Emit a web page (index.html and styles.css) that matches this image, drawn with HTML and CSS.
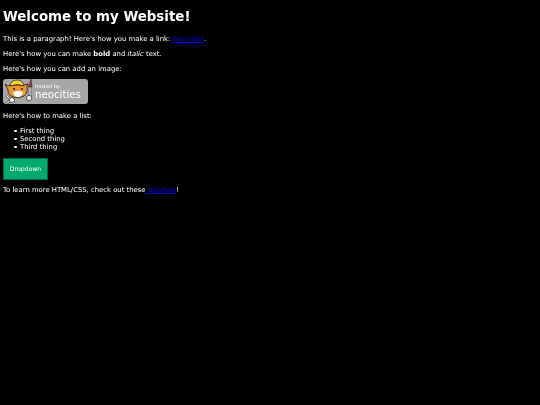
FILE: index.html
```html
<!DOCTYPE html>
<html lang="en">
<head>
    <meta charset="UTF-8">
    <title>My Website</title>
    <link rel="stylesheet" href="styles.css">
</head>
<body>
    <h1>Welcome to my Website!</h1>
    <p>This is a paragraph! Here's how you make a link: <a href="#">Neocities</a>.</p>
    <p>Here's how you can make <strong>bold</strong> and <em>italic</em> text.</p>
    <p>Here's how you can add an image:</p>
    <a href="#" class="badge">
        <svg class="badge-cat" width="32" height="25" viewBox="0 0 32 25">
            <path d="M5 7 L2 5 L5 11 Q5 16 10 18 Q16 20 21 17 Q25 14 24 8 L25 5 L21 6 L8 6 Z" fill="#e8962e" stroke="#1c1c1c" stroke-width="0.8"/>
            <path d="M7 7 Q8 1 14 1 Q20 1 21 7 Q14 4 7 7 Z" fill="#f2d23c" stroke="#1c1c1c" stroke-width="0.7"/>
            <path d="M10 13 Q15 11 20 13 Q19 18 15 18 Q11 18 10 13 Z" fill="#fff"/>
            <circle cx="11" cy="10" r="1" fill="#1c1c1c"/>
            <circle cx="19" cy="10" r="1" fill="#1c1c1c"/>
            <path d="M3 16 L12 25 M11 19 L4 24" stroke="#1c1c1c" stroke-width="2.2"/>
            <path d="M3 16 L12 25 M11 19 L4 24" stroke="#eee" stroke-width="1.2"/>
            <circle cx="9" cy="21" r="2.5" fill="#fff" stroke="#1c1c1c" stroke-width="0.7"/>
            <path d="M27 8 L27 17" stroke="#1c1c1c" stroke-width="2.4"/>
            <path d="M27 8 L27 17" stroke="#eee" stroke-width="1.4"/>
            <path d="M28 0 L29 8 L25.5 8 Z" fill="#a8323a" stroke="#1c1c1c" stroke-width="0.5"/>
            <circle cx="26" cy="19" r="2.6" fill="#fff" stroke="#1c1c1c" stroke-width="0.7"/>
        </svg>
        <span class="badge-text">
            <span class="badge-small">hosted by,</span>
            <span class="badge-big">neocities</span>
        </span>
    </a>
    <p>Here's how to make a list:</p>
    <ul>
        <li>First thing</li>
        <li>Second thing</li>
        <li>Third thing</li>
    </ul>
    <button class="dropbtn">Dropdown</button>
    <p>To learn more HTML/CSS, check out these <a href="#">tutorials</a>!</p>
</body>
</html>
```

FILE: styles.css
```css
body {
    margin: 0;
    padding: 9px 3px 0;
    background-color: #000;
    color: #fff;
    font-family: "DejaVu Sans", sans-serif;
    font-size: 6.85px;
    line-height: 8px;
    filter: blur(0.25px);
}
h1 {
    margin: 0 0 10.4px;
    font-size: 13.4px;
    line-height: 16px;
}
p {
    margin: 0 0 6.7px;
}
a {
    color: #0000ee;
}
.badge {
    display: flex;
    width: 85px;
    height: 25px;
    margin-bottom: 8px;
    border-radius: 3px;
    background-color: #a6a6a6;
    color: #fff;
    text-decoration: none;
}
.badge-text {
    display: flex;
    flex-direction: column;
    padding-top: 4px;
}
.badge-small {
    font-size: 5px;
    line-height: 6px;
}
.badge-big {
    font-size: 10.2px;
    line-height: 11px;
}
ul {
    margin: 0 0 6.7px;
    padding-left: 17px;
    list-style: none;
}
li::before {
    content: "";
    display: inline-block;
    width: 2.5px;
    height: 2.5px;
    margin: 0 3.5px 1px -6px;
    border-radius: 50%;
    background-color: #fff;
}
.dropbtn {
    display: block;
    width: 45px;
    height: 22px;
    margin-bottom: 6px;
    padding: 0;
    border: 1px solid #00663f;
    background-color: #04aa6d;
    color: #fff;
    font-family: inherit;
    font-size: 6.2px;
}
```
